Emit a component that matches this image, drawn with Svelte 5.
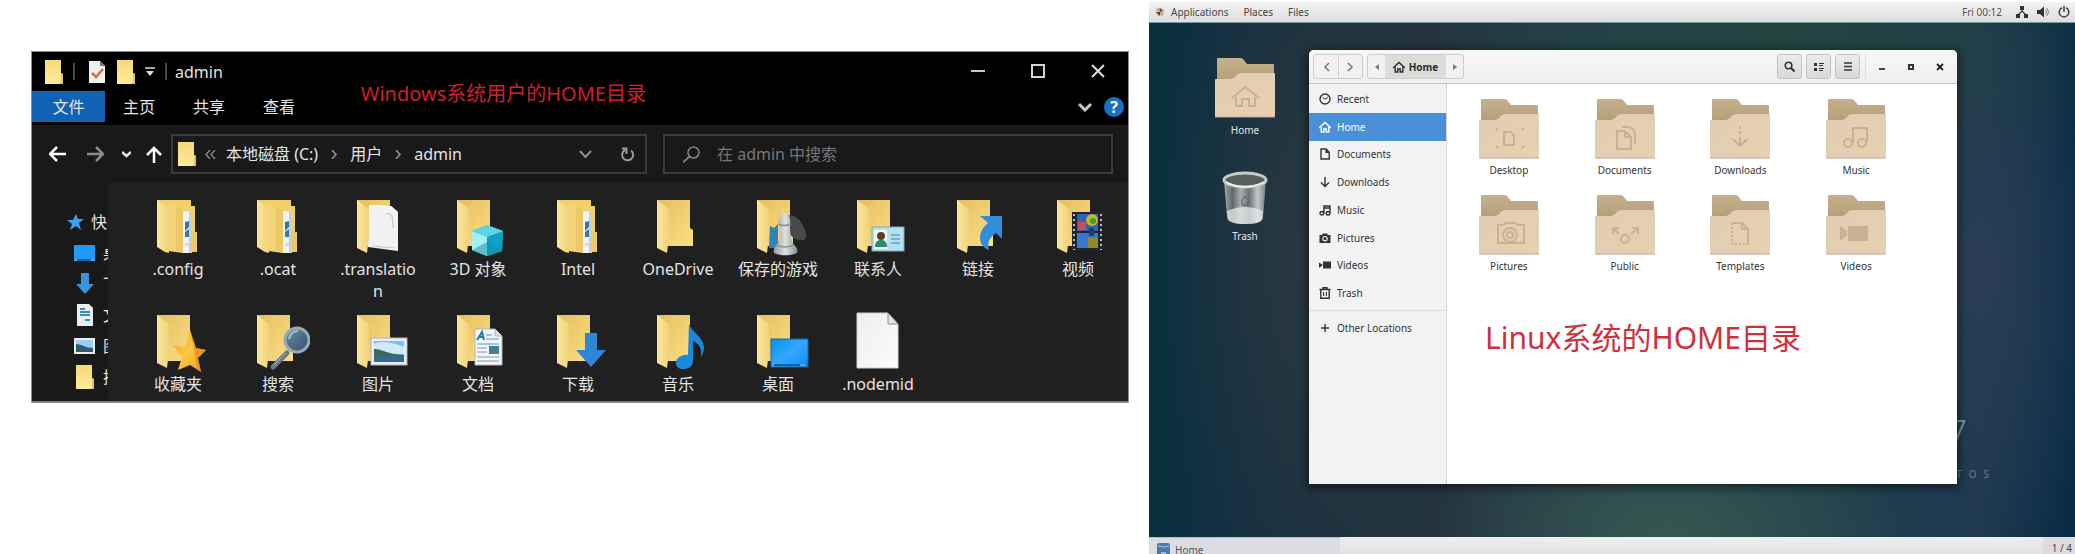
<script>
  const quick = [
    { icon: 'q-desktop', label: '桌面' },
    { icon: 'q-down', label: '下载' },
    { icon: 'q-doc', label: '文档' },
    { icon: 'q-pic', label: '图片' },
    { icon: 'folder', label: '搜索' }
  ];
  const winItems = [
    { name: '.config', kind: 'full' },
    { name: '.ocat', kind: 'full' },
    { name: '.translation', kind: 'pages' },
    { name: '3D 对象', kind: 'cube' },
    { name: 'Intel', kind: 'full' },
    { name: 'OneDrive', kind: 'empty' },
    { name: '保存的游戏', kind: 'games' },
    { name: '联系人', kind: 'contacts' },
    { name: '链接', kind: 'links' },
    { name: '视频', kind: 'video' },
    { name: '收藏夹', kind: 'star' },
    { name: '搜索', kind: 'search' },
    { name: '图片', kind: 'picture' },
    { name: '文档', kind: 'document' },
    { name: '下载', kind: 'download' },
    { name: '音乐', kind: 'music' },
    { name: '桌面', kind: 'desktop' },
    { name: '.nodemid', kind: 'file' }
  ];
  const places = ['Recent', 'Home', 'Documents', 'Downloads', 'Music', 'Pictures', 'Videos', 'Trash'];
  const folders = ['Desktop', 'Documents', 'Downloads', 'Music', 'Pictures', 'Public', 'Templates', 'Videos'];
</script>

{#snippet smallFolder()}
  <svg width="18" height="24" viewBox="0 0 18 24">
    <path d="M0 0h16v13l2 1v10H0z" fill="url(#smallFold)" />
    <path d="M16 13v9l-2 2h4V14z" fill="#e6c560" />
  </svg>
{/snippet}

{#snippet winIcon(kind)}
  <svg class="big" width="64" height="62" viewBox="0 0 64 62">
    {#if kind === 'file'}
      <path d="M11 2h31l10 11v44H11z" fill="url(#paper)" stroke="#cfcfcf" />
      <path d="M42 2v11h10z" fill="#e3e3e3" stroke="#8f8f8f" />
    {:else if kind === 'full'}
      <path d="M11 4h34v6h4v26h2v20H36V20H11z" fill="#f1d06c" />
      <path d="M45 36h5v20h-3z" fill="#e9c766" />
      <path d="M37 15l9 1v41h-9z" fill="#f1f4f6" />
      <path d="M43 16l3 0v41h-3z" fill="#c9cdd0" />
      <path d="M39 26l4-1v6l-4 4zM39 36l4-3v8h-4z" fill="#2f7aa6" />
      <path d="M39 47h4v3h-4z" fill="#d5dbe0" />
      <path d="M23 8l14 6v43l-15-2z" fill="#f2d377" />
      <path d="M30 11l7 3v43l-7-3z" fill="#e9c766" opacity=".8" />
      <path d="M11 4l12 8v45l-4-1-8-5z" fill="url(#flap)" />
    {:else}
      <path d="M11 4h33v28l3 2v16H11z" fill="url(#back)" />
      {#if kind === 'pages'}
        <path d="M23 9l22 1 7 6v39l-30-4z" fill="#f1f1f3" />
        <path d="M23 9l22 1 7 6-8-3z" fill="#fff" />
        <path d="M40 18h4c2 1 3 4 3 14" fill="none" stroke="#b9bbc0" />
        <path d="M27 50l22 2" stroke="#c3c5c9" />
      {/if}
      <path d="M11 4l11 8 1 4v25l-2 16-10-5z" fill="url(#flap)" />
      {#if kind === 'cube'}
        <path d="M41 29l16 6-1 20-15 5-15-6V35z" fill="#31bfd3" />
        <path d="M26 35l15 6v19l-15-6z" fill="#a5f0f2" />
        <path d="M41 41l16-6-1 20-15 5z" fill="#129fc4" />
        <path d="M41 29l16 6-16 6-15-6z" fill="#5ed3e2" />
        <path d="M26 54l15-8 15 9-15 5z" fill="#0e8fa5" opacity=".5" />
      {:else if kind === 'games'}
        <path d="M24 30l4 2 4-4v24h-9z" fill="#3181bd" />
        <path d="M38 20c7-2 14 0 18 8 4 7 6 14 2 16-6 1-12-2-16-8z" fill="#48494b" />
        <path d="M33 29c-1-9 1-12 5-12s7 3 6 12c0 10 1 15 4 20 3 2 4 5 3 8-6 3-17 3-23 0-1-3 0-6 3-8 3-5 3-11 2-20z" fill="url(#chess)" />
        <path d="M32 28q6 3 13 0M30 49q9 4 18 0" fill="none" stroke="#8d9498" stroke-width="1.5" />
      {:else if kind === 'contacts'}
        <rect x="26" y="31" width="32" height="24" fill="#b4e0f3" stroke="#7ea9bd" />
        <rect x="28" y="34" width="13" height="19" fill="#eef8ea" />
        <path d="M29 51c0-6 3-7 6-7s6 1 6 7z" fill="#2e8a6b" />
        <circle cx="35" cy="40" r="4" fill="#5a3f31" />
        <path d="M45 39h9M45 43h9M45 47h9" stroke="#3d7f9f" />
      {:else if kind === 'links'}
        <path d="M34 20h22v23l-6-6c-7 5-9 10-7 17-5-2-9-6-9-12 0-7 4-12 8-15z" fill="#338ddb" />
      {:else if kind === 'video'}
        <rect x="26" y="16" width="31" height="38" fill="#22252b" />
        <rect x="31" y="18" width="21" height="17" fill="#2e63b8" />
        <rect x="31" y="37" width="21" height="15" fill="#3a77cf" />
        <circle cx="46" cy="24" r="6" fill="#c8b61e" />
        <circle cx="47" cy="25" r="3" fill="#3c9b35" />
        <path d="M32 26h8v8h-8z" fill="#c84d53" />
        <path d="M42 42h10v10H42z" fill="#8d8b2c" />
        <path d="M43 32h5v8h-5z" fill="#1d3e71" />
        <path d="M28 18v36M55 18v36" stroke="#bbb" stroke-width="2" stroke-dasharray="2 3" />
      {:else if kind === 'star'}
        <path d="M44 19l6 18 10 2-8 8 3 14-11-7-12 5 4-13-9-12 12 2z" fill="url(#gold)" />
        <path d="M44 19l6 18 10 2-8 8 3 14-4-3-2-15z" fill="#e5801e" opacity=".6" />
      {:else if kind === 'search'}
        <path d="M41 42L27 56" stroke="#6d7880" stroke-width="5" stroke-linecap="round" />
        <path d="M40 42L28 54" stroke="#aab4ba" stroke-width="1" />
        <circle cx="51" cy="29" r="12" fill="url(#lens)" stroke="#98aab6" stroke-width="3" />
        <path d="M43 28c1-5 4-8 9-8" fill="none" stroke="#9ec4d8" stroke-width="2" />
      {:else if kind === 'picture'}
        <rect x="25" y="27" width="36" height="27" fill="#eceff2" stroke="#adb5bd" />
        <rect x="28" y="30" width="30" height="21" fill="#86bdf0" />
        <path d="M28 33c9-4 20-1 30 3v7H28z" fill="#cfe9f8" />
        <path d="M28 38c8 0 13 5 30 6v7H28z" fill="#3a6a59" />
        <path d="M28 47c10-3 20-2 30-1v5H28z" fill="#356b93" />
      {:else if kind === 'document'}
        <path d="M29 18h20l7 7v29H29z" fill="#f4f7f9" stroke="#aeb6bd" />
        <path d="M49 18v7h7" fill="#d8dde1" stroke="#aeb6bd" />
        <path d="M31 29l5-8 2 8m-5-3h5" fill="none" stroke="#237ca8" stroke-width="2" />
        <path d="M40 24h6M40 28h13M31 33h22" stroke="#4b9ac2" />
        <rect x="43" y="35" width="10" height="8" fill="#467f91" />
        <path d="M31 37h10M31 41h10M31 46h22M31 50h22" stroke="#8c969c" />
      {:else if kind === 'download'}
        <path d="M39 22h12v17h9L45 56 30 39h9z" fill="#2f86d6" />
      {:else if kind === 'music'}
        <path d="M43 13c2 7 14 13 15 23 0 5-2 8-3 10 1-8-1-13-8-16v20c0 6-5 8-10 8-4 0-7-2-7-6 0-5 6-9 12-8z" fill="#1989dc" />
      {:else if kind === 'desktop'}
        <rect x="25" y="28" width="37" height="28" fill="url(#screen)" stroke="#1567a6" />
        <path d="M26 54h35" stroke="#0d62ac" stroke-width="2" />
        <path d="M26 54h2M54 54h6" stroke="#bfe2ff" />
      {/if}
    {/if}
  </svg>
{/snippet}

{#snippet placeIcon(name)}
  <svg width="12" height="12" viewBox="0 0 12 12" fill="none" stroke="currentColor" stroke-width="1.4">
    {#if name === 'Recent'}
      <circle cx="6" cy="6" r="5" /><path d="M3.5 4.5L6 6l3-1.5" stroke-width="1" />
    {:else if name === 'Home'}
      <path d="M0 7l6-5.5L12 7" /><path d="M2.2 6v5h2.6V8h2.4v3h2.6V6" />
    {:else if name === 'Documents'}
      <path d="M2 1h5l3.2 3.2V11H2z" /><path d="M6.5 1v4h4z" fill="currentColor" stroke="none" />
    {:else if name === 'Downloads'}
      <path d="M6 1v9M2 6.500l4 4 4-4" />
    {:else if name === 'Music'}
      <path d="M5 9.500V2h6v7" /><circle cx="2.800" cy="9.300" r="1.800" /><circle cx="9" cy="9.300" r="1.800" /><path d="M5 4h6" />
    {:else if name === 'Pictures'}
      <path d="M.5 3H3l1-1.500h4L9 3h2.500v8H.5z" fill="currentColor" stroke="none" />
      <circle cx="6" cy="6.700" r="2.200" stroke="#f1f2f2" stroke-width="1.100" />
    {:else if name === 'Videos'}
      <path d="M4 2.500h8v7H4zM0 3.500l3.300 2v1.200L0 8.800z" fill="currentColor" stroke="none" />
    {:else if name === 'Trash'}
      <path d="M.5 2.500h11M4 2V.8h4V2M1.800 3v8.300h8.400V3" /><path d="M4.600 5v4M7.400 5v4" stroke-width="1.100" />
    {:else}
      <path d="M6 2v8M2 6h8" />
    {/if}
  </svg>
{/snippet}

{#snippet gnomeFolder(name)}
  <svg class="gf" width="62" height="62" viewBox="0 0 62 62">
    <path d="M3 2q0-1 1-1h22q2 0 3 1l4 5h26q1 0 1 1v20H3z" fill="url(#gBack)" />
    <path d="M1 23q0-1 1-1h14q3 0 5-2l3-3q2-1 4-1h32q1 0 1 1v42q0 1-1 1H2q-1 0-1-1z" fill="url(#gFront)" />
    <path d="M1 60h60" stroke="#bda993" />
    <g fill="none" stroke="#c6b294" stroke-width="2">
      {#if name === 'Home'}
        <path d="M18 41l13-11 14 11" /><path d="M22 40v9h6v-7h7v7h6v-9" />
      {:else if name === 'Desktop'}
        <path d="M26 34h7l3 4v9H26z" /><path d="M18 32l2-2M44 30l2 2M18 48l2 2M44 50l2-2" />
      {:else if name === 'Documents'}
        <path d="M23 33h8l6 6v12H23z" /><path d="M31 33v6h6" /><path d="M28 29h7q6 2 6 8v9" />
      {:else if name === 'Downloads'}
        <path d="M31 28v10" stroke-dasharray="3 2" /><path d="M31 39v9M24 41l7 7 7-7" />
      {:else if name === 'Music'}
        <path d="M28 45V30h14v15" /><circle cx="23" cy="45" r="4" /><circle cx="37" cy="45" r="4" />
      {:else if name === 'Pictures'}
        <path d="M20 31h5l3-2h9l3 2h6v18H20z" /><circle cx="32" cy="41" r="7" /><circle cx="32" cy="41" r="3" />
      {:else if name === 'Public'}
        <circle cx="31" cy="45" r="4" /><path d="M19 40v-6h6M19 34l6 6M44 40v-6h-6M44 34l-7 6" />
      {:else if name === 'Templates'}
        <path d="M23 29h10l6 6v14" /><path d="M33 29v6h6" /><path d="M23 29v21h17" stroke-dasharray="2 2" />
      {:else}
        <path d="M24 33h18v13H24zM16 34l5 3v4l-5 4z" fill="#c6b294" />
      {/if}
    </g>
  </svg>
{/snippet}

<svg class="defs" width="0" height="0" aria-hidden="true">
  <defs>
    <linearGradient id="smallFold" x1="0" y1="0" x2="0" y2="1"><stop offset="0" stop-color="#f5d978" /><stop offset="1" stop-color="#ffea9c" /></linearGradient>
    <linearGradient id="flap" x1="0" y1="0" x2="1" y2="0"><stop offset="0" stop-color="#fbe69d" /><stop offset="1" stop-color="#f1d37b" /></linearGradient>
    <linearGradient id="back" x1="0" y1="0" x2="1" y2="1"><stop offset="0" stop-color="#e5bf5e" /><stop offset="1" stop-color="#fbdf85" /></linearGradient>
    <linearGradient id="paper" x1="0" y1="0" x2="1" y2="1"><stop offset="0" stop-color="#eeeef0" /><stop offset="1" stop-color="#fbfbfc" /></linearGradient>
    <linearGradient id="chess" x1="0" y1="0" x2="1" y2="0"><stop offset="0" stop-color="#949b9f" /><stop offset=".5" stop-color="#dde1e4" /><stop offset="1" stop-color="#858b8f" /></linearGradient>
    <linearGradient id="gold" x1="0" y1="0" x2="1" y2="1"><stop offset="0" stop-color="#f6a62c" /><stop offset=".5" stop-color="#fcc742" /><stop offset="1" stop-color="#ee9526" /></linearGradient>
    <linearGradient id="lens" x1="0" y1="0" x2="1" y2="1"><stop offset="0" stop-color="#6b8ba2" /><stop offset="1" stop-color="#32536c" /></linearGradient>
    <linearGradient id="screen" x1="0" y1="0" x2="1" y2="1"><stop offset="0" stop-color="#0a90ee" /><stop offset=".5" stop-color="#32a8ff" /><stop offset="1" stop-color="#0c8df0" /></linearGradient>
    <linearGradient id="gBack" x1="0" y1="0" x2="0" y2="1"><stop offset="0" stop-color="#c4b18a" /><stop offset="1" stop-color="#b09a75" /></linearGradient>
    <linearGradient id="gFront" x1="0" y1="0" x2="1" y2="1"><stop offset="0" stop-color="#e0cdb1" /><stop offset="1" stop-color="#e6d0b2" /></linearGradient>
    <linearGradient id="bin" x1="0" y1="0" x2="1" y2="0"><stop offset="0" stop-color="#a4abab" /><stop offset=".2" stop-color="#62696a" /><stop offset=".4" stop-color="#a9afaf" /><stop offset=".6" stop-color="#6c7273" /><stop offset=".8" stop-color="#c3c8c8" /><stop offset="1" stop-color="#777e7f" /></linearGradient>
  </defs>
</svg>

<main>
  <section class="left">
    <div class="explorer">
      <header class="chrome">
        <div class="titlebar">
          <div class="quickbar">
            {@render smallFolder()}
            <i class="bar b1"></i>
            <svg width="16" height="22" viewBox="0 0 16 22"><path d="M0 0h11l5 5v17H0z" fill="#f2f0ef" /><path d="M11 0v5h5z" fill="#777" /><path d="M3 12l4 4 7-8" fill="none" stroke="#c9714d" stroke-width="2.500" /></svg>
            <span class="f2">{@render smallFolder()}</span>
            <svg class="dd" width="10" height="9" viewBox="0 0 10 9"><path d="M0 1h10" stroke="#ddd" stroke-width="1.500" /><path d="M1 4h8L5 9z" fill="#ddd" /></svg>
            <i class="bar b2"></i>
            <span class="wtitle">admin</span>
          </div>
          <div class="winctl">
            <button aria-label="最小化"><svg width="14" height="14"><path d="M0 7h14" stroke="#c9c9c9" stroke-width="2" /></svg></button>
            <button aria-label="最大化"><svg width="14" height="14"><path d="M1 1h12v12H1z" fill="none" stroke="#d5d5d5" stroke-width="2" /></svg></button>
            <button aria-label="关闭"><svg width="14" height="14"><path d="M1 1l12 12M13 1L1 13" stroke="#e0e0e0" stroke-width="2" /></svg></button>
          </div>
        </div>
        <div class="tabs">
          <button class="file">文件</button>
          <button>主页</button>
          <button>共享</button>
          <button>查看</button>
          <span class="fill"></span>
          <svg width="14" height="10" viewBox="0 0 14 10"><path d="M1 2l6 6 6-6" fill="none" stroke="#c8c8c8" stroke-width="3" /></svg>
          <button class="help">?</button>
        </div>
        <div class="note1">Windows系统用户的HOME目录</div>
      </header>

      <div class="nav">
        <div class="arrows">
          <svg width="17" height="16" viewBox="0 0 17 16"><path d="M17 8H2M8 1L1 8l7 7" fill="none" stroke="#fff" stroke-width="2.500" /></svg>
          <svg width="17" height="16" viewBox="0 0 17 16"><path d="M0 8h15M9 1l7 7-7 7" fill="none" stroke="#8c8c8c" stroke-width="2.500" /></svg>
          <svg width="9" height="7" viewBox="0 0 9 7"><path d="M0 1l4.500 4L9 1" fill="none" stroke="#e0e0e0" stroke-width="2.500" /></svg>
          <svg width="16" height="17" viewBox="0 0 16 17"><path d="M8 17V2M1 9l7-7 7 7" fill="none" stroke="#fff" stroke-width="2.500" /></svg>
        </div>
        <div class="address">
          {@render smallFolder()}
          <svg class="lq" width="11" height="9" viewBox="0 0 11 9"><path d="M5 0L1 4.500 5 9M10 0L6 4.500 10 9" fill="none" stroke="#8b8b8b" stroke-width="1.400" /></svg>
          <span>本地磁盘 (C:)</span>
          <svg class="gt" width="6" height="9" viewBox="0 0 6 9"><path d="M1 0l4 4.500L1 9" fill="none" stroke="#999" stroke-width="1.600" /></svg>
          <span>用户</span>
          <svg class="gt" width="6" height="9" viewBox="0 0 6 9"><path d="M1 0l4 4.500L1 9" fill="none" stroke="#999" stroke-width="1.600" /></svg>
          <span>admin</span>
          <span class="fill"></span>
          <svg width="13" height="9" viewBox="0 0 13 9"><path d="M1 1l5.500 6L12 1" fill="none" stroke="#8c8c8c" stroke-width="2" /></svg>
          <svg class="rl" width="15" height="16" viewBox="0 0 15 16"><path d="M11 4.500a5.500 5.500 0 1 1-6-.5M2 2.500h4.500V8" fill="none" stroke="#999" stroke-width="2" /></svg>
        </div>
        <div class="search">
          <svg width="17" height="17" viewBox="0 0 17 17"><circle cx="10.500" cy="6.500" r="5.500" fill="none" stroke="#808080" stroke-width="1.600" /><path d="M6.500 10.500L0 16.500" stroke="#808080" stroke-width="1.800" /></svg>
          <input type="text" aria-label="搜索" placeholder="在 admin 中搜索" />
        </div>
      </div>

      <div class="body">
        <aside class="tree">
          <div class="t0"><svg width="17" height="16" viewBox="0 0 17 16"><path d="M9 0l2 5 6 0-5 4 2 7-5-4-6 4 2-6-5-4h6z" fill="#3ba2f2" /></svg><span>快</span></div>
          {#each quick as q}
            <div class="t1">
              <span class="qi">
                {#if q.icon === 'q-desktop'}
                  <svg width="21" height="16"><path d="M0 0h21v16H0z" fill="#1f9bf5" /><path d="M1 15h19" stroke="#0c64b5" stroke-width="2" /><path d="M1 15h2M17 15h3" stroke="#cfe8ff" /></svg>
                {:else if q.icon === 'q-down'}
                  <svg width="18" height="21" viewBox="0 0 18 21"><path d="M5 0h8v11h5l-9 10-9-10h5z" fill="#3b92de" /></svg>
                {:else if q.icon === 'q-doc'}
                  <svg width="16" height="22" viewBox="0 0 16 22"><path d="M0 0h12l4 4v18H0z" fill="#e9eef1" /><path d="M3 5h5M3 8h10M3 11h10M8 16h5" stroke="#3b8dba" stroke-width="2" /></svg>
                {:else if q.icon === 'q-pic'}
                  <svg width="21" height="16"><path d="M0 0h21v16H0z" fill="#e8ecef" /><path d="M2 2h17v12H2z" fill="#9bcdf0" /><path d="M2 6c6 0 9 4 17 4v4H2z" fill="#2f5c72" /></svg>
                {:else}
                  {@render smallFolder()}
                {/if}
              </span>
              <span class="ql">{q.label}</span>
            </div>
          {/each}
        </aside>
        <ul class="files">
          {#each winItems as it}
            <li>{@render winIcon(it.kind)}<span>{it.name}</span></li>
          {/each}
        </ul>
      </div>
    </div>
  </section>

  <section class="gnome">
    <header class="top">
      <svg class="foot" width="10" height="10" viewBox="0 0 10 10"><circle cx="5" cy="5" r="4.500" fill="#cdc6c2" /><path d="M1 2l4-1v4z" fill="#caa23e" /><path d="M5 1l3 3-3 1z" fill="#65406f" /><path d="M5 5l4 1-3 3z" fill="#d0b070" /><path d="M1 5l4 0v4z" fill="#413a62" /></svg>
      <button class="app">Applications</button>
      <button>Places</button>
      <button>Files</button>
      <span class="fill"></span>
      <time>Fri 00:12</time>
      <svg class="s1" width="12" height="12" viewBox="0 0 12 12"><path d="M4 0h4v4H4zM0 8h4v4H0zM8 8h4v4H8z" fill="#333" /><path d="M6 3v3M2 9l4-4 4 4" fill="none" stroke="#333" stroke-width="1.200" /></svg>
      <svg class="s2" width="12" height="12" viewBox="0 0 12 12"><path d="M0 4h3l4-3.500v11L3 8H0z" fill="#333" /><path d="M8.500 3.500q2 2.500 0 5M10 2q3 4 0 8" fill="none" stroke="#888" /></svg>
      <svg class="s3" width="12" height="12" viewBox="0 0 12 12"><path d="M4 1.800a4.800 4.800 0 1 0 4 0M6 0v6" fill="none" stroke="#444" stroke-width="1.500" /></svg>
    </header>

    <div class="stage">
      <div class="brand"><b>7</b><span><i>T</i><i>O</i><i>S</i></span></div>
      <div class="shortcuts">
        <div class="sc">{@render gnomeFolder('Home')}<span>Home</span></div>
        <div class="sc">
          <svg width="46" height="54" viewBox="0 0 46 54">
            <path d="M2 9l3 38q1 6 18 6t18-6l3-38z" fill="url(#bin)" />
            <path d="M5 40q18-8 36 0l-1 8q-2 5-17 5T6 48z" fill="#e5e9e9" opacity=".75" />
            <ellipse cx="23" cy="9" rx="21" ry="7" fill="#56605f" stroke="#c5caca" stroke-width="3" />
            <path d="M4 11q19 10 38 0" fill="none" stroke="#edf0f0" stroke-width="1.500" />
            <path d="M20 29l3-4 4 4-2 5h-5z" fill="none" stroke="#555b5c" />
          </svg>
          <span>Trash</span>
        </div>
      </div>

      <div class="files-win">
        <div class="hb">
          <div class="seg nav2">
            <button aria-label="Back"><svg width="7" height="10" viewBox="0 0 7 10"><path d="M6 1L2 5l4 4" fill="none" stroke="#777" stroke-width="1.500" /></svg></button>
            <button aria-label="Forward"><svg width="7" height="10" viewBox="0 0 7 10"><path d="M1 1l4 4-4 4" fill="none" stroke="#777" stroke-width="1.500" /></svg></button>
          </div>
          <div class="seg path">
            <button aria-label="Earlier"><svg width="4" height="6"><path d="M4 0v6L0 3z" fill="#777" /></svg></button>
            <button class="cur">{@render placeIcon('Home')}<b>Home</b></button>
            <button aria-label="Later"><svg width="4" height="6"><path d="M0 0v6l4-3z" fill="#777" /></svg></button>
          </div>
          <span class="fill"></span>
          <div class="tools">
            <button aria-label="Search"><svg width="11" height="11" viewBox="0 0 11 11"><circle cx="4.500" cy="4.500" r="3.300" fill="none" stroke="#333" stroke-width="1.600" /><path d="M7 7l3.500 3.500" stroke="#333" stroke-width="2" /></svg></button>
            <button aria-label="View"><svg width="10" height="9" viewBox="0 0 10 9"><path d="M0 1h3v3H0zM0 6h3v3H0zM5 1h5v1H5zM5 3h4v1H5zM5 6h5v1H5zM5 8h4v1H5z" fill="#333" /></svg></button>
            <button aria-label="Menu"><svg width="8" height="9"><path d="M0 1h8M0 4.500h8M0 8h8" stroke="#333" stroke-width="1.600" /></svg></button>
          </div>
          <div class="wc">
            <button aria-label="Minimize"><svg width="8" height="8"><path d="M1 6h6" stroke="#444" stroke-width="2" /></svg></button>
            <button aria-label="Maximize"><svg width="8" height="8"><path d="M2 2h4v4H2z" fill="none" stroke="#333" stroke-width="2" /></svg></button>
            <button aria-label="Close"><svg width="8" height="8"><path d="M1 1l6 6M7 1L1 7" stroke="#222" stroke-width="1.800" /></svg></button>
          </div>
        </div>
        <div class="fw">
          <nav>
            <ul>
              {#each places as p}
                <li class:on={p === 'Home'}><a href="#{p}">{@render placeIcon(p)}{p}</a></li>
              {/each}
            </ul>
            <a class="other" href="#other">{@render placeIcon('Other')}Other Locations</a>
          </nav>
          <div class="pane">
            <ul>
              {#each folders as f}
                <li>{@render gnomeFolder(f)}<span>{f}</span></li>
              {/each}
            </ul>
            <p class="note2">Linux系统的HOME目录</p>
          </div>
        </div>
      </div>
    </div>

    <footer>
      <button class="task"><svg width="13" height="13" viewBox="0 0 13 13"><rect width="13" height="13" rx="2" fill="#4f78ad" /><path d="M1 3q5.500 2 11 0" fill="none" stroke="#a9c3e2" /><path d="M4 9h5v3H4z" fill="#9db9da" /></svg>Home</button>
      <span class="ws">1 / 4</span>
    </footer>
  </section>
</main>

<style>
  :global(body) { margin: 0; background: #fff; }
  * { box-sizing: border-box; }
  ul { list-style: none; margin: 0; padding: 0; }
  button { font: inherit; color: inherit; background: none; border: 0; padding: 0; margin: 0; }
  svg { display: block; flex: none; }
  a { color: inherit; text-decoration: none; }
  .defs { position: absolute; }
  .fill { flex: 1; }
  main {
    display: grid;
    grid-template-columns: 1149fr 926fr;
    min-height: 100vh;
    font-family: "Noto Sans", "Noto Sans CJK SC", sans-serif;
  }

  .left { padding: 52px 21px 0 32px; }
  .explorer { background: #191919; color: #e4e4e4; font-size: 16px; line-height: 22px; border-bottom: 1px solid #777; box-shadow: 0 0 0 1px #8e8e8e; }
  .chrome { background: #000; position: relative; padding-bottom: 3px; }
  .titlebar { display: flex; height: 39px; justify-content: space-between; }
  .quickbar { display: flex; align-items: center; padding-left: 13px; }
  .bar { width: 2px; height: 17px; background: #484848; }
  .b1 { margin: 0 14px 0 10px; }
  .f2 { margin: 0 10px 0 12px; }
  .b2 { margin: 0 8px 0 10px; }
  .wtitle { line-height: 40px; }
  .winctl { display: flex; align-items: flex-start; padding: 12px 23px 0 0; gap: 46px; }
  .tabs { display: flex; align-items: center; height: 31px; padding-right: 4px; }
  .tabs button { margin-right: 38px; height: 31px; line-height: 32px; }
  .tabs .file { background: #0f62b4; width: 73px; margin-right: 18px; }
  .tabs .help { width: 20px; height: 20px; line-height: 20px; border-radius: 50%; background: #1670c8; color: #fff; font-weight: 700; margin: 0 0 0 12px; }
  .note1 { position: absolute; left: 30%; top: 29px; font-size: 20px; line-height: 26px; color: #d01f2e; white-space: nowrap; }

  .nav { display: grid; grid-template-columns: 139px 476fr 466fr; padding: 9px 15px 9px 0; }
  .arrows { display: flex; align-items: center; padding-left: 17px; gap: 21px; }
  .arrows svg:nth-child(3) { margin: 0 -6px 0 -3px; }
  .address, .search { height: 40px; border: 2px solid #3b3b3b; display: flex; align-items: center; white-space: nowrap; }
  .address { padding: 0 10px 0 5px; }
  .search { margin-left: 16px; padding-left: 18px; }
  .lq { margin: 0 10px 0 9px; }
  .gt { margin: 0 13px 0 13px; }
  .rl { margin-left: 28px; }
  .search input { flex: 1; min-width: 0; margin-left: 17px; padding: 0; background: none; border: 0; outline: 0; font: inherit; color: #ddd; }
  .search input::placeholder { color: #777; opacity: 1; }

  .body { display: grid; grid-template-columns: 76px 1fr; }
  .tree { overflow: hidden; padding-top: 26px; white-space: nowrap; }
  .t0 { display: flex; align-items: center; height: 26px; margin-bottom: 2px; padding-left: 35px; gap: 7px; }
  .t1 { display: flex; align-items: center; height: 31px; padding-left: 42px; gap: 8px; }
  .qi { width: 21px; display: flex; justify-content: center; flex: none; }
  .files { background: #202020; display: grid; grid-template-columns: repeat(10, 1fr); grid-template-rows: 115px 85px; padding: 13px 0 5px 20px; }
  .files li { display: flex; flex-direction: column; align-items: center; }
  .files span { width: 82px; text-align: center; word-break: break-all; line-height: 22px; }

  .gnome { display: flex; flex-direction: column; padding-top: 2px; height: 100vh; min-height: 540px; font-size: 10px; line-height: 14px; color: #333; }
  .top { display: flex; align-items: center; height: 21px; background: linear-gradient(#f2f2f2, #dedede); border-bottom: 1px solid #7d95a3; padding: 0 5px 0 6px; }
  .top button { margin-right: 15px; color: #444; }
  .top .app { margin-left: 6px; }
  time { color: #555; }
  .s1 { margin-left: 14px; }
  .s2 { margin-left: 9px; }
  .s3 { margin-left: 9px; }
  .stage {
    flex: 1; position: relative; display: flex; min-height: 0; padding: 27px 118px 53px 51px; overflow: hidden;
    background:
      radial-gradient(ellipse 26% 30% at 56% 100%, #375650 0%, transparent 100%),
      radial-gradient(ellipse 40% 40% at 68% 0%, #23443f 0%, transparent 100%),
      radial-gradient(ellipse 14% 60% at 90% 48%, #2a3d55 0%, transparent 100%),
      radial-gradient(ellipse 17% 75% at 18% 45%, #2a3840 0%, transparent 100%),
      linear-gradient(90deg, #08303f 0%, #142f40 10%, #24343f 32%, #24404c 50%, #21404c 70%, #1d3850 90%, #082a45 100%);
  }
  .brand { position: absolute; right: 86px; bottom: 56px; color: #7d9ba0; text-align: right; line-height: 14px; }
  .brand b { display: block; font-size: 34px; font-weight: 300; line-height: 36px; margin: 0 22px 17px 0; }
  .brand span { display: flex; gap: 7px; justify-content: flex-end; }
  .brand i { font-style: normal; color: #66808f; }
  .shortcuts { flex: none; width: 90px; margin-right: 19px; padding-top: 7px; color: #e6e6e6; }
  .sc { display: flex; flex-direction: column; align-items: center; gap: 4px; margin-bottom: 34px; }

  .files-win { position: relative; flex: 1; min-width: 0; display: flex; flex-direction: column; background: #fff; border-radius: 5px 5px 0 0; box-shadow: 0 2px 9px 2px rgba(0, 0, 0, .5); overflow: hidden; }
  .hb { display: flex; align-items: center; height: 34px; background: linear-gradient(#f7f7f7, #efefef); border-bottom: 1px solid #c4c4c4; padding: 0 13px 0 4px; flex: none; }
  .seg { display: flex; height: 25px; border: 1px solid #cdcdcd; border-radius: 3px; background: #f1f1f1; }
  .seg button { display: flex; align-items: center; justify-content: center; }
  .nav2 button { width: 24px; }
  .nav2 button + button { border-left: 1px solid #d0d0d0; }
  .path { margin-left: 4px; }
  .path button { width: 17px; }
  .path .cur { width: 61px; gap: 4px; background: #dcdcda; color: #2c2c2c; }
  .tools { display: flex; gap: 4px; padding-right: 5px; border-right: 1px solid #dedede; }
  .tools button { width: 25px; height: 25px; border: 1px solid #c4c4c4; border-radius: 3px; background: linear-gradient(#ececec, #d9d9d9); display: flex; align-items: center; justify-content: center; }
  .wc { display: flex; gap: 21px; padding-left: 12px; }
  .fw { flex: 1; display: grid; grid-template-columns: 138px 1fr; min-height: 0; }
  nav { background: #f2f2f2; border-right: 1px solid #d3d3d3; padding-top: 1px; }
  nav ul { display: grid; grid-auto-rows: 1fr; height: 222px; }
  nav li { display: flex; }
  nav a { display: flex; align-items: center; gap: 6px; padding-left: 10px; flex: 1; color: #333; }
  nav .on { background: #4a90d9; }
  nav .on a { color: #fff; }
  nav .other { border-top: 1px solid #dedede; margin-top: 3px; height: 35px; }
  .pane ul { display: grid; grid-template-columns: repeat(4, 1fr); grid-auto-rows: 96px; padding: 14px 43px 0 4px; }
  .pane li { display: flex; flex-direction: column; align-items: center; gap: 3px; }
  .note2 { margin: 29px 0 0 38px; font-size: 30px; line-height: 38px; color: #d0303a; white-space: nowrap; }

  footer { flex: none; display: flex; justify-content: space-between; height: 17px; overflow: hidden; background: linear-gradient(#eeeef0, #e2e2e4); }
  .task { display: flex; align-items: flex-start; gap: 5px; width: 191px; padding: 5px 0 0 8px; background: #dbdde2; border-top: 1px solid #b4bcc6; height: 22px; color: #555; text-align: left; }
  .ws { width: 32px; padding: 4px 3px 0 0; text-align: right; background: #dcdcde; color: #444; }
</style>
